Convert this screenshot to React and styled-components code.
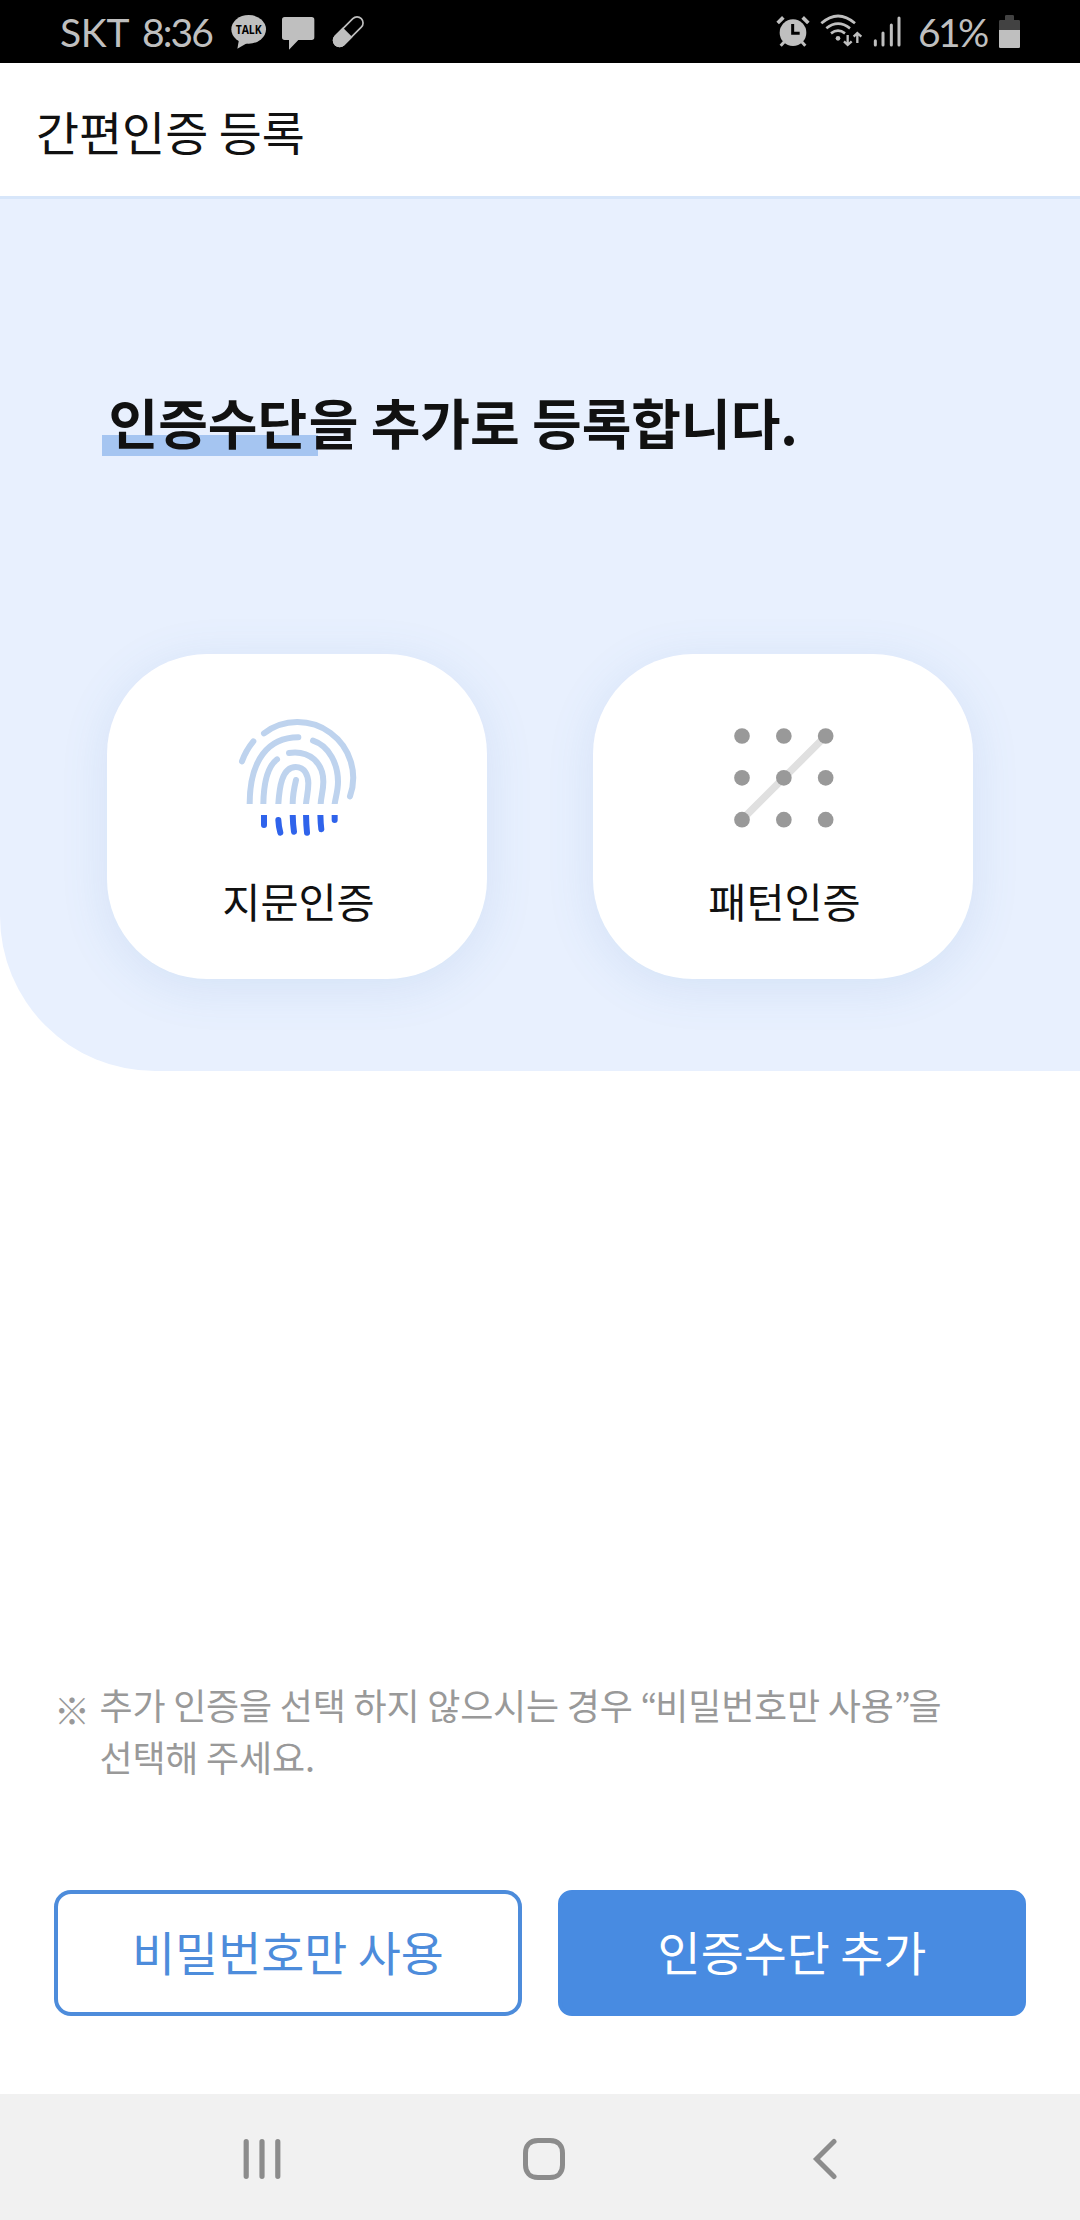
import React from "react";
import styled, { createGlobalStyle } from "styled-components";

const App = () => (
  <Screen>
    <GlobalStyle />
    <StatusBar />
    <Header>간편인증 등록</Header>
    <Hero>
      <Heading>
        <Marked>인증수단</Marked>을 추가로 등록합니다.
      </Heading>
      <Cards>
        <Card>
          <FingerprintIcon />
          <Label>지문인증</Label>
        </Card>
        <Card>
          <PatternIcon />
          <Label>패턴인증</Label>
        </Card>
      </Cards>
    </Hero>
    <Bottom>
      <Notice>
        <Mark>※</Mark>
        <span>
          추가 인증을 선택 하지 않으시는 경우 <Quote>“</Quote>비밀번호만 사용<Quote>”</Quote>을
          <br />
          선택해 주세요.
        </span>
      </Notice>
      <Actions>
        <Button>비밀번호만 사용</Button>
        <Button $primary>인증수단 추가</Button>
      </Actions>
    </Bottom>
    <NavBar />
  </Screen>
);

const StatusBar = () => (
  <Status>
    <StatusText $width={82} $spacing={-0.3}>SKT</StatusText>
    <StatusText $width={89} $spacing={-1.9}>8:36</StatusText>
    <StatusIcons $gap={15}>
      <TalkIcon />
      <MessageIcon />
      <PillIcon />
    </StatusIcons>
    <Spacer />
    <StatusIcons $gap={10}>
      <AlarmIcon />
      <WifiIcon />
      <SignalIcon />
    </StatusIcons>
    <Battery>
      <StatusText $width={81} $spacing={-2.6}>61%</StatusText>
      <BatteryIcon />
    </Battery>
  </Status>
);

const TalkIcon = () => (
  <svg width="36" height="63" viewBox="572 0 108 189">
    <ellipse cx="625" cy="88" rx="52" ry="43" fill="#bfbfbf" />
    <path d="M597 114L591 146L622 128Z" fill="#bfbfbf" />
    <TalkText x="586" y="103" textLength="78" lengthAdjust="spacingAndGlyphs">
      TALK
    </TalkText>
  </svg>
);

const MessageIcon = () => (
  <svg width="34" height="63" viewBox="726 0 102 189">
    <path
      d="M734 51H815Q823 51 823 59V112Q823 120 815 120H775L747 149V120H734Q726 120 726 112V59Q726 51 734 51Z"
      fill="#bfbfbf"
    />
  </svg>
);

const PillIcon = () => (
  <svg width="34" height="63" viewBox="873 0 102 189">
    <g transform="rotate(-45 925 95)">
      <rect x="870" y="77" width="110" height="36" rx="18" fill="none" stroke="#bfbfbf" strokeWidth="5" />
      <path d="M922 74.500H888A20.500 20.500 0 0 0 888 115.500H922Z" fill="#bfbfbf" />
    </g>
  </svg>
);

const AlarmIcon = () => (
  <svg width="34" height="63" viewBox="46 0 102 189">
    <circle cx="97" cy="98" r="40" fill="#bfbfbf" />
    <path d="M51 69L68 52M126 52L143 69" stroke="#bfbfbf" strokeWidth="11" />
    <path d="M71 125L60 137M123 125L134 137" stroke="#bfbfbf" strokeWidth="9" />
    <path d="M96 72V100H117" fill="none" stroke="#000" strokeWidth="9" />
  </svg>
);

const WifiIcon = () => (
  <svg width="43" height="63" viewBox="181 0 129 189">
    <g fill="none" stroke="#bfbfbf" strokeWidth="8">
      <path d="M185 70Q235 26 286 70" />
      <path d="M200 85Q235 57 271 85" />
      <path d="M214 100Q235 84 256 100" />
    </g>
    <circle cx="235" cy="115" r="7" fill="#bfbfbf" />
    <path
      d="M264 105V135M253 124L264 135L276 124M293 129V99M282 110L293 99L305 110"
      fill="none"
      stroke="#bfbfbf"
      strokeWidth="7"
    />
  </svg>
);

const SignalIcon = () => (
  <svg width="29" height="63" viewBox="340 0 87 189">
    <path
      d="M347 122V135M370 99V135M395 75V135M418 54V135"
      stroke="#bfbfbf"
      strokeWidth="9"
      strokeLinecap="round"
    />
  </svg>
);

const BatteryIcon = () => (
  <svg width="21" height="63" viewBox="717 0 63 189">
    <path d="M721 60H735V49Q735 45 739 45H758Q762 45 762 49V60H776Q780 60 780 64V90H717V64Q717 60 721 60Z" fill="#424242" />
    <path d="M717 90H780V140Q780 144 776 144H721Q717 144 717 140Z" fill="#bfbfbf" />
  </svg>
);

const FingerprintIcon = () => (
  <svg width="145" height="145" viewBox="0 0 435 435" fill="none" strokeWidth="18" strokeLinecap="round">
    <clipPath id="top">
      <rect width="435" height="297" />
    </clipPath>
    <clipPath id="bottom">
      <rect y="330" width="435" height="105" />
    </clipPath>
    <g stroke="#bed3ee" clipPath="url(#top)">
      <path d="M117 85A167 167 0 0 1 375 274" />
      <path d="M85 109Q62 137 51 169" />
      <path d="M220 97C130 97 74 165 74 297V310" />
      <path d="M264 107C314 123 339 180 339 230C339 257 332 275 329 297L327 312" />
      <path d="M156 163C127 185 116 235 115 297V310" />
      <path d="M192 144C255 135 295 175 295 230C295 257 288 275 287 297L286 312" />
      <path d="M160 310V297C163 250 170 186 212 186C240 186 250 212 250 235C250 260 245 275 243 297L242 312" />
      <path d="M213 225C207 250 203 275 203 297V312" />
    </g>
    <g stroke="#2f63eb" clipPath="url(#bottom)">
      <path d="M117 315V360M160 345Q161 366 166 383M203 315Q203 355 207 380M243 315Q243 355 246 383M286 315Q286 350 289 373M329 315V345" />
    </g>
  </svg>
);

const steps = [93, 218.5, 344];

const PatternIcon = () => (
  <svg width="145" height="145" viewBox="0 0 435 435">
    <path d="M93 344L344 93" stroke="#e0e0e0" strokeWidth="22" />
    {steps.map((y) =>
      steps.map((x) => <circle key={`${x}-${y}`} cx={x} cy={y} r="23.500" fill="#999" />)
    )}
  </svg>
);

const NavBar = () => (
  <Nav>
    <svg width="42" height="42" viewBox="0 0 42 42">
      <path
        d="M5.200 3.700V38.300M21 3.700V38.300M36.800 3.700V38.300"
        stroke="#8c8c8c"
        strokeWidth="5.200"
        strokeLinecap="round"
      />
    </svg>
    <svg width="42" height="42" viewBox="0 0 42 42">
      <path
        d="M15 2.500H27C35.500 2.500 39.500 8 39.500 15V27C39.500 34 35.500 39.500 27 39.500H15C6.500 39.500 2.500 34 2.500 27V15C2.500 8 6.500 2.500 15 2.500Z"
        fill="none"
        stroke="#8c8c8c"
        strokeWidth="5"
      />
    </svg>
    <svg width="42" height="42" viewBox="0 0 42 42">
      <path
        d="M30 3.500L12.500 21L30 38.500"
        fill="none"
        stroke="#8c8c8c"
        strokeWidth="5"
        strokeLinecap="round"
      />
    </svg>
  </Nav>
);

const GlobalStyle = createGlobalStyle`
  body {
    margin: 0;
    background: #fff;
  }
`;

const Screen = styled.div`
  display: flex;
  flex-direction: column;
  width: 1080px;
  height: 2220px;
  background: #fff;
  color: #111;
  font-family: "Noto Sans CJK KR", sans-serif;
  font-size: 36px;
`;

const Status = styled.div`
  display: flex;
  box-sizing: border-box;
  height: 63px;
  padding: 0 60px;
  background: #000;
`;

const StatusText = styled.span`
  width: ${({ $width }) => $width}px;
  color: #bfbfbf;
  font-family: Lato, sans-serif;
  font-size: 39px;
  line-height: 64px;
  letter-spacing: ${({ $spacing }) => $spacing}px;
  white-space: nowrap;
`;

const StatusIcons = styled.div`
  display: flex;
  gap: ${({ $gap }) => $gap}px;
`;

const Spacer = styled.div`
  flex: 1;
`;

const Battery = styled.div`
  display: flex;
  margin-left: 16px;
`;

const TalkText = styled.text`
  fill: #000;
  font-family: "Open Sans", sans-serif;
  font-size: 38px;
  font-weight: 700;
`;

const Header = styled.header`
  box-sizing: border-box;
  height: 136px;
  padding-left: 36px;
  border-bottom: 3px solid #d7e6fa;
  font-size: 46.8px;
  line-height: 135px;
`;

const Hero = styled.section`
  box-sizing: border-box;
  height: 872px;
  padding: 183px 107px 0;
  border-bottom-left-radius: 155px;
  background: #e8f0fe;
`;

const Heading = styled.h1`
  height: 80px;
  margin: 0 0 192px;
  font-size: 54px;
  font-weight: 700;
  line-height: 80px;
  white-space: nowrap;
`;

const Marked = styled.span`
  margin: 0 -9.5px 0 -5px;
  padding: 0 11px 0 6.5px;
  background: linear-gradient(#a5c5f1, #a5c5f1) 0 53px / 100% 21px no-repeat;
`;

const Cards = styled.div`
  display: flex;
  justify-content: space-between;
`;

const Card = styled.button`
  display: flex;
  flex-direction: column;
  align-items: center;
  box-sizing: border-box;
  width: 380px;
  height: 325px;
  padding: 51px 0 0 1px;
  border: 0;
  border-radius: 100px;
  background: #fff;
  box-shadow: 0 8px 48px rgba(80, 130, 195, 0.13);
  color: inherit;
  font: inherit;
`;

const Label = styled.span`
  margin-top: 20px;
  padding-left: 2px;
  font-size: 41.4px;
  line-height: 61px;
`;

const Bottom = styled.div`
  display: flex;
  flex: 1;
  flex-direction: column;
  justify-content: flex-end;
  padding: 0 54px 78px;
`;

const Notice = styled.p`
  display: flex;
  margin: 0 0 108px;
  color: #999;
  letter-spacing: -0.2px;
  line-height: 52px;
  white-space: nowrap;
`;

const Mark = styled.span`
  width: 45.5px;
  padding-top: 5px;
`;

const Quote = styled.span`
  letter-spacing: -2.2px;
`;

const Actions = styled.div`
  display: flex;
  gap: 36px;
`;

const Button = styled.button`
  flex: 1;
  height: 126px;
  padding: 0 0 6px;
  border: 4px solid ${({ $primary }) => ($primary ? "#488be1" : "#4d8cdb")};
  border-radius: ${({ $primary }) => ($primary ? 14 : 17)}px;
  background: ${({ $primary }) => ($primary ? "#488be1" : "#fff")};
  color: ${({ $primary }) => ($primary ? "#fff" : "#4d8cdb")};
  font-family: inherit;
  font-size: 46.8px;
`;

const Nav = styled.nav`
  display: flex;
  justify-content: space-between;
  align-items: center;
  box-sizing: border-box;
  height: 126px;
  padding: 4px 234px 0 241px;
  background: #f1f1f1;
`;

export default App;
